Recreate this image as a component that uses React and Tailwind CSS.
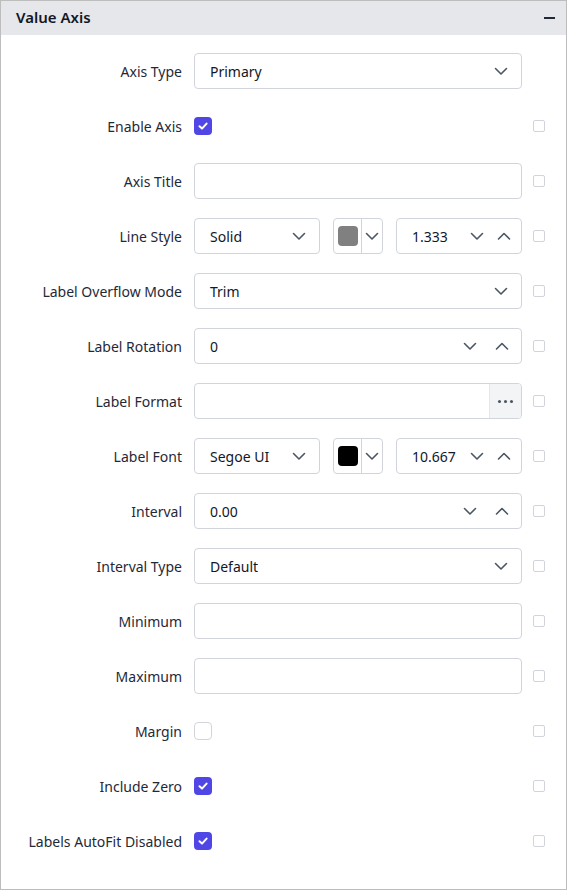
import React from "react";

const font = { fontFamily: '"Noto Sans", "Liberation Sans", sans-serif' };

function Chevron({ up = false }) {
    return (
        <svg width="14" height="14" viewBox="0 0 14 14" fill="none" className="shrink-0">
            <polyline
                points={up ? "1.5,10 7,4.5 12.5,10" : "1.5,4.5 7,10 12.5,4.5"}
                stroke="#4b5563"
                strokeWidth="1.6"
                strokeLinecap="round"
                strokeLinejoin="round"
            />
        </svg>
    );
}

function Check({ checked }) {
    if (!checked) {
        return <div className="w-[18px] h-[18px] rounded-[4px] border border-[#d1d5db] bg-white" />;
    }
    return (
        <div className="w-[18px] h-[18px] rounded-[4px] bg-[#4f46e5] flex items-center justify-center">
            <svg width="12" height="12" viewBox="0 0 12 12" fill="none">
                <polyline points="2.5,6.3 5,8.6 9.6,3.6" stroke="white" strokeWidth="2" strokeLinecap="round" strokeLinejoin="round" />
            </svg>
        </div>
    );
}

function Dropdown({ value, className = "" }) {
    return (
        <div className={"h-9 flex items-center justify-between pl-[15px] pr-[13px] border border-[#d1d5db] rounded-[4px] bg-white " + className}>
            <span className="text-[14px] text-[#111827]">{value}</span>
            <Chevron />
        </div>
    );
}

// spinner input; the wide ones spread their arrows a bit more
function Numeric({ value, wide = false, className = "" }) {
    return (
        <div className={"h-9 flex items-center pl-[15px] border border-[#d1d5db] rounded-[4px] bg-white " + (wide ? "pr-[12px] " : "pr-[10px] ") + className}>
            <span className="text-[14px] text-[#111827] flex-1">{value}</span>
            <div className={"flex items-center " + (wide ? "gap-[18px]" : "gap-[13px]")}>
                <Chevron />
                <Chevron up />
            </div>
        </div>
    );
}

function ColorPick({ color }) {
    return (
        <div className="h-9 w-[50px] flex items-center border border-[#d1d5db] rounded-[4px] bg-white">
            <div className="w-[28px] h-full flex items-center justify-center border-r border-[#d1d5db]">
                <div className="w-[20px] h-[20px] rounded-[4px]" style={{ background: color }} />
            </div>
            <div className="flex-1 flex items-center justify-center">
                <Chevron />
            </div>
        </div>
    );
}

function TextBox() {
    return <div className="h-9 w-[328px] border border-[#d1d5db] rounded-[4px] bg-white" />;
}

function FontGroup({ left, color, size }) {
    return (
        <div className="w-[328px] flex items-center gap-[13px]">
            <Dropdown value={left} className="w-[126px]" />
            <ColorPick color={color} />
            <Numeric value={size} className="flex-1" />
        </div>
    );
}

function Row({ label, children, side = true }) {
    return (
        <div className="h-9 flex items-center">
            <div className="w-[181px] text-right text-[14px] text-[#1f2937] whitespace-nowrap">{label}</div>
            <div className="ml-[12px] w-[328px] flex items-center">{children}</div>
            {side && <div className="ml-[11px] w-[12px] h-[12px] border border-[#d1d5db] rounded-[2px] bg-white" />}
        </div>
    );
}

export default function App() {
    return (
        <div style={font} className="w-[567px] h-[890px] border border-[#bdbdbd] bg-white overflow-hidden">
            <div className="h-[34px] flex items-center justify-between pl-[15px] pr-[8px] bg-[#e5e7eb] border-b border-[#e5e7eb]">
                <span className="text-[15px] font-semibold text-[#111827]">Value Axis</span>
                <div className="w-[11px] h-[2px] bg-[#1f2937] mr-[3px]" />
            </div>

            <div className="pt-[18px] flex flex-col gap-[19px]">
                <Row label="Axis Type" side={false}>
                    <Dropdown value="Primary" className="w-[328px]" />
                </Row>
                <Row label="Enable Axis">
                    <Check checked />
                </Row>
                <Row label="Axis Title">
                    <TextBox />
                </Row>
                <Row label="Line Style">
                    <FontGroup left="Solid" color="#808080" size="1.333" />
                </Row>
                <Row label="Label Overflow Mode">
                    <Dropdown value="Trim" className="w-[328px]" />
                </Row>
                <Row label="Label Rotation">
                    <Numeric value="0" wide className="w-[328px]" />
                </Row>
                <Row label="Label Format">
                    <div className="h-9 w-[328px] flex border border-[#d1d5db] rounded-[4px] bg-white overflow-hidden">
                        <div className="flex-1" />
                        <div className="w-[32px] flex items-center justify-center gap-[3px] bg-[#f3f4f6] border-l border-[#e5e7eb]">
                            <span className="w-[3px] h-[3px] rounded-full bg-[#4b5563]" />
                            <span className="w-[3px] h-[3px] rounded-full bg-[#4b5563]" />
                            <span className="w-[3px] h-[3px] rounded-full bg-[#4b5563]" />
                        </div>
                    </div>
                </Row>
                <Row label="Label Font">
                    <FontGroup left="Segoe UI" color="#000000" size="10.667" />
                </Row>
                <Row label="Interval">
                    <Numeric value="0.00" wide className="w-[328px]" />
                </Row>
                <Row label="Interval Type">
                    <Dropdown value="Default" className="w-[328px]" />
                </Row>
                <Row label="Minimum">
                    <TextBox />
                </Row>
                <Row label="Maximum">
                    <TextBox />
                </Row>
                <Row label="Margin">
                    <Check checked={false} />
                </Row>
                <Row label="Include Zero">
                    <Check checked />
                </Row>
                <Row label="Labels AutoFit Disabled">
                    <Check checked />
                </Row>
            </div>
        </div>
    );
}
